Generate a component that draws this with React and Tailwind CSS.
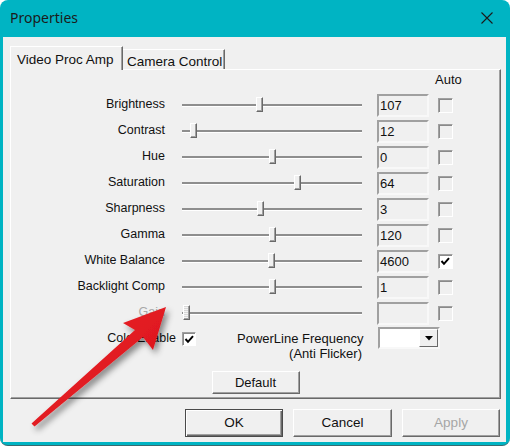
import React from "react";

const rows = [
  { label: "Brightness", value: "107", pos: 259 },
  { label: "Contrast", value: "12", pos: 193 },
  { label: "Hue", value: "0", pos: 272 },
  { label: "Saturation", value: "64", pos: 297 },
  { label: "Sharpness", value: "3", pos: 260 },
  { label: "Gamma", value: "120", pos: 272 },
  { label: "White Balance", value: "4600", pos: 271, auto: true },
  { label: "Backlight Comp", value: "1", pos: 272 },
  { label: "Gain", value: "", pos: 186, disabled: true },
];

function Check() {
  return (
    <svg width="11" height="11" viewBox="0 0 11 11" className="block">
      <polyline points="1.5,5 4,7.8 9,2.2" fill="none" stroke="#000" strokeWidth="2" />
    </svg>
  );
}

function CheckBox({ checked, size = "w-[15px] h-[15px]" }) {
  return (
    <div
      className={`${size} box-border border border-t-[#a0a0a0] border-l-[#a0a0a0] border-r-white border-b-white shadow-[inset_1px_1px_0_#8a8a8a] flex items-center justify-center ${
        checked ? "bg-white" : "bg-[#f0f0f0]"
      }`}
    >
      {checked && <Check />}
    </div>
  );
}

function Slider({ pos, disabled }) {
  return (
    <div className="relative w-[180px] h-[26px] flex items-center">
      <div className="w-full h-[3px] bg-[#8e8e8e] border-b border-white" />
      <div
        className={`absolute top-[5px] w-[7px] h-[15px] box-border border border-t-white border-l-white border-r-[#696969] border-b-[#696969] shadow-[inset_-1px_-1px_0_#a0a0a0] ${
          disabled ? "bg-[repeating-linear-gradient(0deg,#d8d8d8_0,#d8d8d8_1px,#f4f4f4_1px,#f4f4f4_2px)]" : "bg-[#f0f0f0]"
        }`}
        style={{ left: pos - 182 - 3.5 }}
      />
    </div>
  );
}

function Row({ label, value, pos, auto, disabled }) {
  return (
    <div className="flex items-center h-[26px]">
      <div
        className={`w-[154px] text-right text-[12.5px] -translate-y-[1px] ${
          disabled ? "text-[#a8a8a8]" : "text-[#111]"
        }`}
      >
        {label}
      </div>
      <div className="ml-[17px]">
        <Slider pos={pos} disabled={disabled} />
      </div>
      <div className="ml-[15px] w-[52px] h-[23px] box-border border-2 border-t-[#a0a0a0] border-l-[#a0a0a0] border-r-[#f8f8f8] border-b-[#f8f8f8] bg-[#f0f0f0] pl-[1px] flex items-center text-[#111] leading-none">
        {value}
      </div>
      <div className="ml-[9px]">
        <CheckBox checked={auto} />
      </div>
    </div>
  );
}

function Btn({ children, w, disabled, isDefault, h = "h-[28px]" }) {
  if (isDefault) {
    return (
      <div className={`${w} ${h} box-border border border-[#4a4a4a] bg-[#f0f0f0] shadow-[inset_1px_1px_0_#fff,inset_-1px_-1px_0_#696969,inset_-2px_-2px_0_#a0a0a0] flex items-center justify-center text-[#111]`}>
        {children}
      </div>
    );
  }
  return (
    <div
      className={`${w} ${h} box-border border border-t-white border-l-white border-r-[#696969] border-b-[#696969] shadow-[inset_-1px_-1px_0_#a0a0a0] bg-[#f0f0f0] flex items-center justify-center ${
        disabled ? "text-[#a6a6a6]" : "text-[#111]"
      }`}
    >
      {children}
    </div>
  );
}

export default function App() {
  return (
    <div className="w-[510px] h-[446px] bg-white relative overflow-hidden font-['Liberation_Sans',Arial,sans-serif] text-[13px]">
      <div className="w-full h-full rounded-[8px] bg-[#00b4c3] flex flex-col pl-[3px] pr-[4px] pb-[4px] overflow-hidden border-b border-[#3a6b70]">
        {/* title bar */}
        <div className="h-[37px] flex items-center justify-between pl-[7px] pr-[13px] shrink-0">
          <div className="font-['Noto_Sans','Open_Sans',sans-serif] text-[14px] text-[#1b1b1b] -translate-y-[1px]">
            Properties
          </div>
          <svg width="12" height="12" viewBox="0 0 12 12" className="-translate-y-[1px]">
            <path d="M0.5 0.5 L11.5 11.5 M11.5 0.5 L0.5 11.5" stroke="#1b1b1b" strokeWidth="1.1" />
          </svg>
        </div>
        {/* body */}
        <div className="flex-1 bg-[#f0f0f0] flex flex-col pt-[9px] pb-[5px]">
          {/* tabs */}
          <div className="flex items-start h-[23px] ml-[7px] relative z-10">
            <div className="h-[24px] w-[113px] box-border border border-b-0 border-t-white border-l-white border-r-[#696969] shadow-[inset_-1px_0_0_#a0a0a0] bg-[#f0f0f0] pl-[6px] pt-[3px] text-[13.5px] text-[#111]">
              Video Proc Amp
            </div>
            <div className="mt-[3px] h-[20px] w-[102px] box-border border-t border-r border-t-white border-r-[#696969] shadow-[inset_-1px_0_0_#a0a0a0] pl-[4px] pt-[2px] text-[13.5px] text-[#111]">
              Camera Control
            </div>
          </div>
          {/* panel */}
          <div className="ml-[7px] mr-[5px] h-[330px] box-border border border-t-white border-l-white border-r-[#696969] border-b-[#696969] shadow-[inset_-1px_-1px_0_#a0a0a0] flex flex-col">
            <div className="mt-[3px] h-[14px] leading-[14px] pl-[424px] text-[#111]">Auto</div>
            <div className="mt-[5px] flex flex-col">
              {rows.map((r) => (
                <Row key={r.label} {...r} />
              ))}
            </div>
            {/* color enable / powerline */}
            <div className="mt-[1px] flex items-start h-[34px]">
              <div className="w-[165px] text-right pt-[4px] leading-[15px] text-[12.5px] text-[#111]">ColorEnable</div>
              <div className="ml-[6px] mt-[5px]">
                <CheckBox checked size="w-[14px] h-[14px]" />
              </div>
              <div className="ml-[41px] w-[125px] text-right pt-[4px] leading-[15px] text-[#111] whitespace-nowrap">
                <div className="text-left">PowerLine Frequency</div>
                <div>(Anti Flicker)</div>
              </div>
              <div className="ml-[16px] w-[62px] h-[22px] box-border border-2 border-t-[#a0a0a0] border-l-[#a0a0a0] border-r-[#f8f8f8] border-b-[#f8f8f8] bg-white flex justify-end">
                <div className="w-[19px] h-full box-border border border-t-white border-l-white border-r-[#696969] border-b-[#696969] bg-[#f0f0f0] flex items-center justify-center">
                  <svg width="8" height="5" viewBox="0 0 8 5">
                    <polygon points="0,0 8,0 4,4.5" fill="#000" />
                  </svg>
                </div>
              </div>
            </div>
            <div className="mt-[10px] flex justify-center">
              <Btn w="w-[88px]" h="h-[23px]">Default</Btn>
            </div>
          </div>
          {/* bottom buttons */}
          <div className="mt-[10px] flex justify-end pr-[6px] gap-[10px] text-[13.5px]">
            <Btn w="w-[98px]" isDefault>OK</Btn>
            <Btn w="w-[99px]">Cancel</Btn>
            <Btn w="w-[98px]" disabled>Apply</Btn>
          </div>
        </div>
      </div>
      {/* red arrow annotation */}
      <svg className="absolute left-0 top-0 pointer-events-none" width="510" height="446" viewBox="0 0 510 446">
        <defs>
          <filter id="sh" x="-20%" y="-20%" width="140%" height="140%">
            <feDropShadow dx="3" dy="4" stdDeviation="3" floodColor="#000" floodOpacity="0.45" />
          </filter>
          <linearGradient id="rg" x1="0" y1="0" x2="1" y2="1">
            <stop offset="0" stopColor="#f0262c" />
            <stop offset="1" stopColor="#d40f16" />
          </linearGradient>
        </defs>
        <polygon
          filter="url(#sh)"
          fill="url(#rg)"
          points="166,307 123,323 135,330 31.5,423.5 34.5,426.5 143,337 153,350"
        />
      </svg>
    </div>
  );
}
